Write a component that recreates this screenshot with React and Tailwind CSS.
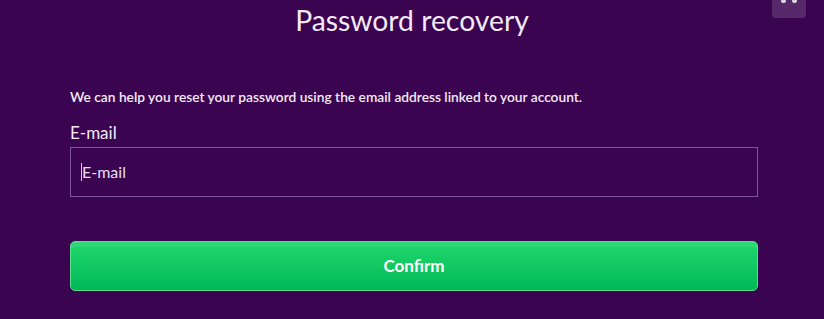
export default function App() {
  return (
    <div
      className="relative h-[319px] w-[824px] overflow-hidden bg-[#3a0450] text-white"
      style={{ fontFamily: 'Lato, "Open Sans", sans-serif' }}
    >
      <div className="absolute right-[18px] top-0 h-[18px] w-[34px] rounded-b-sm bg-white/15">
        <div className="-mt-[1px] flex justify-center gap-[6px]">
          <span className="h-[4px] w-[5px] rounded-full bg-white/80" />
          <span className="h-[4px] w-[5px] rounded-full bg-white/80" />
        </div>
      </div>

      <h1 className="pt-[2px] text-center text-[28.3px] leading-[36px] text-[#f4eaf7]">
        Password recovery
      </h1>

      <div className="px-[70px] pt-[50px] pr-[66px]">
        <p className="text-[13.75px] font-semibold leading-[18px] text-[#f4eaf7]">
          We can help you reset your password using the email address linked to your account.
        </p>

        <label className="mt-[16px] block text-[17px] leading-[22px] text-[#f4eaf7]">E-mail</label>

        <div className="mt-[3px] flex h-[50px] items-center border border-[#7d53a0] bg-[#3a0450] px-[10px]">
          <span className="h-[18px] w-px bg-[#d9c8e3]" />
          <span className="text-[16px] text-[#eadff0]">E-mail</span>
        </div>

        <button className="mt-[44px] flex h-[50px] w-full items-center justify-center rounded-[5px] border border-[#5fdc8f] bg-gradient-to-b from-[#1ed86c] to-[#00b858] text-[17px] font-bold text-white shadow-[inset_0_5px_0_rgba(255,255,255,0.08)]">
          Confirm
        </button>
      </div>
    </div>
  );
}
